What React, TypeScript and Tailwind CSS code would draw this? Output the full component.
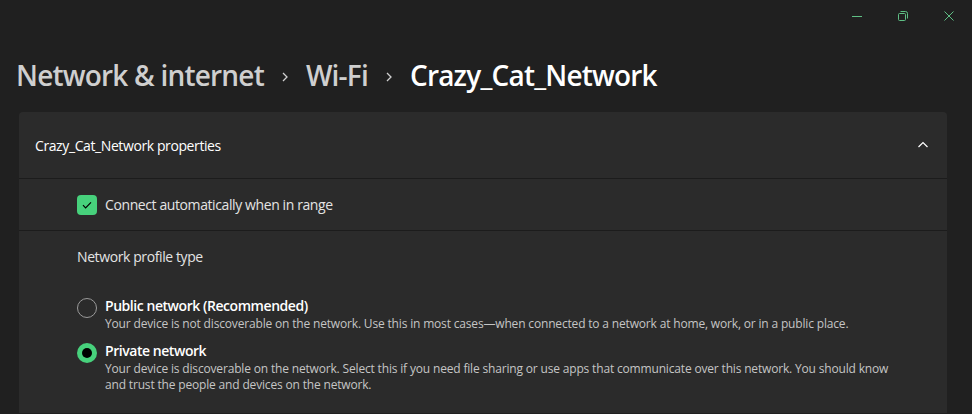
import React from "react";

const font = { fontFamily: '"Open Sans", "Noto Sans", sans-serif' };

const Chevron = () => (
  <svg width="12" height="12" viewBox="0 0 12 12" className="mx-[15px] mt-[4px]">
    <path d="M4 2l4 4-4 4" fill="none" stroke="#d0d0d0" strokeWidth="1.3" />
  </svg>
);

const RadioOption = ({
  checked,
  title,
  children,
}: {
  checked?: boolean;
  title: string;
  children: React.ReactNode;
}) => (
  <div className="flex gap-[8px]">
    <div className="pt-[2px]">
      {checked ? (
        <div className="w-[20px] h-[20px] rounded-full bg-[#47d17c] flex items-center justify-center">
          <div className="w-[10px] h-[10px] rounded-full bg-black" />
        </div>
      ) : (
        <div className="w-[20px] h-[20px] rounded-full border border-[#9a9a9a]" />
      )}
    </div>
    <div>
      <div className="text-[14px] font-semibold text-white leading-[20px] tracking-[-0.45px]">{title}</div>
      <div className="text-[12px] text-[#c5c5c5] leading-[16px] max-w-[800px] tracking-[-0.17px]">{children}</div>
    </div>
  </div>
);

export default function App() {
  return (
    <div className="w-[972px] h-[414px] bg-[#202020] overflow-hidden text-white" style={font}>
      <div className="flex justify-end h-[32px] items-center">
        <div className="w-[46px] flex justify-center">
          <svg width="10" height="10" viewBox="0 0 10 10">
            <path d="M0 5.5h10" stroke="#5fbf84" strokeWidth="1" />
          </svg>
        </div>
        <div className="w-[46px] flex justify-center">
          <svg width="10" height="10" viewBox="0 0 10 10">
            <rect x="0.5" y="2.5" width="7" height="7" rx="1" fill="none" stroke="#5fbf84" />
            <path d="M2.5 0.5h5a2 2 0 0 1 2 2v5" fill="none" stroke="#5fbf84" />
          </svg>
        </div>
        <div className="w-[46px] flex justify-center">
          <svg width="10" height="10" viewBox="0 0 10 10">
            <path d="M0.5 0.5l9 9M9.5 0.5l-9 9" stroke="#5fbf84" strokeWidth="1" />
          </svg>
        </div>
      </div>

      <div className="flex items-center pl-[16px] pt-[22px] h-[84px] pb-[20px] text-[28px] font-semibold tracking-[-0.8px]">
        <span className="text-[#cfcfcf]">Network &amp; internet</span>
        <Chevron />
        <span className="text-[#cfcfcf]">Wi-Fi</span>
        <Chevron />
        <span className="text-white">Crazy_Cat_Network</span>
      </div>

      <div className="ml-[19px] mr-[25px] mt-[-4px] bg-[#2b2b2b] rounded-t-[4px]">
        <div className="h-[67px] flex items-center justify-between pl-[16px] pr-[18px] border-b border-[#1c1c1c]">
          <span className="text-[14px] text-white tracking-[-0.4px]">Crazy_Cat_Network properties</span>
          <svg width="12" height="12" viewBox="0 0 12 12">
            <path d="M1.5 8l4.5-4.5 4.5 4.5" fill="none" stroke="#ffffff" strokeWidth="1.2" />
          </svg>
        </div>
        <div className="h-[52px] flex items-center pl-[58px] gap-[8px] border-b border-[#1c1c1c]">
          <div className="w-[20px] h-[20px] rounded-[4px] bg-[#47d17c] flex items-center justify-center">
            <svg width="12" height="12" viewBox="0 0 12 12">
              <path d="M2 6.2l2.6 2.6L10 3.4" fill="none" stroke="#000" strokeWidth="1.2" />
            </svg>
          </div>
          <span className="text-[14px] text-[#e4e4e4] tracking-[-0.4px]">Connect automatically when in range</span>
        </div>
        <div className="pl-[58px] pt-[16px] pb-[20px]">
          <div className="text-[14px] text-[#e4e4e4] leading-[20px] tracking-[-0.4px]">Network profile type</div>
          <div className="mt-[29px] flex flex-col gap-[9px]">
            <RadioOption title="Public network (Recommended)">
              Your device is not discoverable on the network. Use this in most cases—when connected to a network at home, work, or in a public place.
            </RadioOption>
            <RadioOption checked title="Private network">
              Your device is discoverable on the network. Select this if you need file sharing or use apps that communicate over this network. You should know and trust the people and devices on the network.
            </RadioOption>
          </div>
        </div>
      </div>
    </div>
  );
}
